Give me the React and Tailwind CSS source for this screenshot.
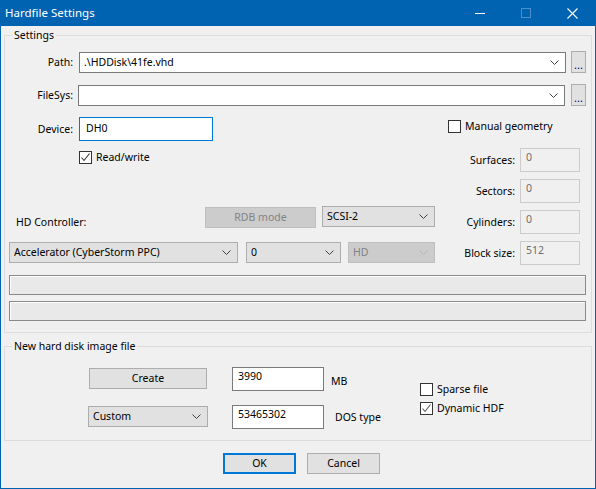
import React from 'react'

const comboStyles = {
    edit: 'bg-white border-[#7a7a7a] text-black',
    list: 'bg-[#e1e1e1] border-[#adadad] text-black',
    disabled: 'bg-[#cccccc] border-[#bfbfbf] text-[#838383]',
}

const editStyles = {
    normal: 'bg-white border-[#7a7a7a] text-black',
    focus: 'bg-white border-[#0078d7] text-black',
    disabled: 'bg-[#f0f0f0] border-[#cccccc] text-[#6d6d6d]',
}

function Chevron({ color = '#404040' }) {
    return (
        <svg width="9" height="5" viewBox="0 0 9 5" className="shrink-0">
            <polyline points="0.5,0.5 4.5,4.5 8.5,0.5" fill="none" stroke={color} strokeWidth="1" />
        </svg>
    )
}

function Combo({ w, text = '', variant = 'list' }) {
    return (
        <div className={`flex items-center h-[21px] border pl-[4px] pr-[6px] ${comboStyles[variant]} ${w}`}>
            <span className="flex-1 truncate leading-[15px]">{text}</span>
            <Chevron color={variant === 'disabled' ? '#b5b5b5' : '#404040'} />
        </div>
    )
}

function Edit({ w, text = '', variant = 'normal', pad = 'pl-[5px]' }) {
    return (
        <div className={`h-[24px] border leading-[17px] ${pad} ${editStyles[variant]} ${w}`}>
            {text}
        </div>
    )
}

function Check({ checked, label, gray }) {
    return (
        <div className="flex items-center h-[13px]">
            <div className="w-[13px] h-[13px] border border-[#333333] bg-white flex items-center justify-center shrink-0">
                {checked && (
                    <svg width="11" height="11" viewBox="0 0 11 11">
                        <polyline points="1.5,5.5 4,8.5 9.5,1.5" fill="none" stroke={gray ? '#5a5a5a' : '#333333'} strokeWidth="1.1" />
                    </svg>
                )}
            </div>
            <span className="ml-[4px] leading-[15px] whitespace-nowrap">{label}</span>
        </div>
    )
}

function Button({ w, children, primary }) {
    return (
        <div className={`h-[21px] flex items-center justify-center bg-[#e1e1e1] leading-[15px] ${w} ${primary ? 'border-2 border-[#0078d7]' : 'border border-[#adadad]'}`}>
            {children}
        </div>
    )
}

function Group({ title, h, mt, children }) {
    return (
        <div className={`relative border border-[#dcdcdc] ${h} ${mt}`}>
            <span className="absolute -top-[9px] left-[7px] px-[2px] bg-[#f0f0f0] leading-[16px]">{title}</span>
            {children}
        </div>
    )
}

function GeoRow({ label, value, mt }) {
    return (
        <div className={`flex items-center ${mt}`}>
            <span className="w-[72px] text-right leading-[15px]">{label}</span>
            <Edit w="ml-[5px] w-[60px]" text={value} variant="disabled" />
        </div>
    )
}

export default function App() {
    return (
        <div className="w-[596px] h-[489px] flex flex-col bg-[#f0f0f0] border-x border-b border-[#0063b1] font-['Noto_Sans',sans-serif] text-[10.5px] text-black overflow-hidden select-none">
            {/* Title bar */}
            <div className="h-[26px] shrink-0 bg-[#0063b1] flex items-center text-white">
                <span className="pl-[4px] text-[11.5px] leading-[18px] flex-1">Hardfile Settings</span>
                <div className="w-[46px] h-[26px] flex items-center justify-center">
                    <div className="w-[10px] h-[1px] bg-white" />
                </div>
                <div className="w-[46px] h-[26px] flex items-center justify-center">
                    <div className="w-[10px] h-[10px] border border-[#4a8fcc]" />
                </div>
                <div className="w-[46px] h-[26px] flex items-center justify-center">
                    <svg width="11" height="11" viewBox="0 0 11 11">
                        <path d="M0.5 0.5 L10.5 10.5 M10.5 0.5 L0.5 10.5" stroke="#ffffff" strokeWidth="1.1" />
                    </svg>
                </div>
            </div>

            <div className="flex flex-col px-[3px]">
                {/* Settings */}
                <Group title="Settings" h="h-[298px]" mt="mt-[9px]">
                    <div className="flex flex-col pt-[15px]">
                        <div className="flex items-start">
                            <span className="w-[68px] h-[22px] flex items-center justify-end pt-[1px]">Path:</span>
                            <div className="ml-[6px] mt-[1px]">
                                <Combo w="w-[487px]" text=".\HDDisk\41fe.vhd" variant="edit" />
                            </div>
                            <Button w="ml-[5px] w-[15px] h-[22px]"><span className="text-[11px] leading-[10px] mt-[6px] text-[#000080]">...</span></Button>
                        </div>
                        <div className="flex items-start mt-[11px]">
                            <span className="w-[68px] h-[22px] flex items-center justify-end pt-[1px]">FileSys:</span>
                            <div className="ml-[5px] mt-[1px]">
                                <Combo w="w-[487px]" variant="edit" />
                            </div>
                            <Button w="ml-[6px] w-[15px] h-[22px]"><span className="text-[11px] leading-[10px] mt-[6px] text-[#000080]">...</span></Button>
                        </div>

                        <div className="flex mt-[11px]">
                            {/* left column */}
                            <div className="w-[438px] flex flex-col">
                                <div className="flex items-center">
                                    <span className="w-[68px] text-right leading-[15px]">Device:</span>
                                    <Edit w="ml-[6px] w-[134px] pt-[2px]" text="DH0" variant="focus" pad="pl-[6px]" />
                                </div>
                                <div className="ml-[74px] mt-[10px]">
                                    <Check checked label="Read/write" />
                                </div>
                                <div className="flex items-start mt-[42px] h-[22px]">
                                    <span className="ml-[11px] mt-[8px] leading-[16px] w-[189px]">HD Controller:</span>
                                    <div className="mt-[1px] w-[111px] h-[21px] flex items-center justify-center bg-[#cccccc] border border-[#bfbfbf] text-[#838383] leading-[15px]">
                                        RDB mode
                                    </div>
                                    <div className="ml-[6px]">
                                        <Combo w="w-[113px]" text="SCSI-2" />
                                    </div>
                                </div>
                                <div className="flex items-center mt-[14px]">
                                    <div className="ml-[4px]">
                                        <Combo w="w-[229px]" text="Accelerator (CyberStorm PPC)" />
                                    </div>
                                    <div className="ml-[8px]">
                                        <Combo w="w-[95px]" text="0" />
                                    </div>
                                    <div className="ml-[7px]">
                                        <Combo w="w-[87px]" text="HD" variant="disabled" />
                                    </div>
                                </div>
                            </div>

                            {/* right column */}
                            <div className="flex flex-col">
                                <div className="ml-[5px] mt-[3px]">
                                    <Check label="Manual geometry" />
                                </div>
                                <GeoRow label="Surfaces:" value="0" mt="mt-[15px]" />
                                <GeoRow label="Sectors:" value="0" mt="mt-[7px]" />
                                <GeoRow label="Cylinders:" value="0" mt="mt-[7px]" />
                                <GeoRow label="Block size:" value="512" mt="mt-[7px]" />
                            </div>
                        </div>

                        <div className="ml-[4px] mt-[10px] w-[577px] h-[20px] border border-[#8a8a8a] bg-[#e9e9e9] shadow-[inset_1px_1px_0_#ffffff]" />
                        <div className="ml-[4px] mt-[6px] w-[577px] h-[20px] border border-[#8a8a8a] bg-[#e9e9e9] shadow-[inset_1px_1px_0_#ffffff]" />
                    </div>
                </Group>

                {/* New hard disk image file */}
                <Group title="New hard disk image file" h="h-[95px]" mt="mt-[13px]">
                    <div className="flex">
                        <div className="w-[415px] flex flex-col pt-[20px]">
                            <div className="flex items-start">
                                <Button w="ml-[84px] mt-[1px] w-[118px]">Create</Button>
                                <Edit w="ml-[25px] w-[92px]" text="3990" />
                                <span className="ml-[7px] mt-[6px] leading-[16px]">MB</span>
                            </div>
                            <div className="flex items-start mt-[14px]">
                                <div className="ml-[83px] mt-[1px]">
                                    <Combo w="w-[120px]" text="Custom" />
                                </div>
                                <Edit w="ml-[24px] w-[92px]" text="53465302" />
                                <span className="ml-[11px] mt-[4px] leading-[16px]">DOS type</span>
                            </div>
                        </div>
                        <div className="flex flex-col pt-[36px] gap-[6px]">
                            <Check label="Sparse file" />
                            <Check checked gray label="Dynamic HDF" />
                        </div>
                    </div>
                </Group>

                {/* OK / Cancel */}
                <div className="flex mt-[12px] ml-[219px] gap-[11px]">
                    <Button w="w-[73px]" primary>OK</Button>
                    <Button w="w-[73px]">Cancel</Button>
                </div>
            </div>
        </div>
    )
}
